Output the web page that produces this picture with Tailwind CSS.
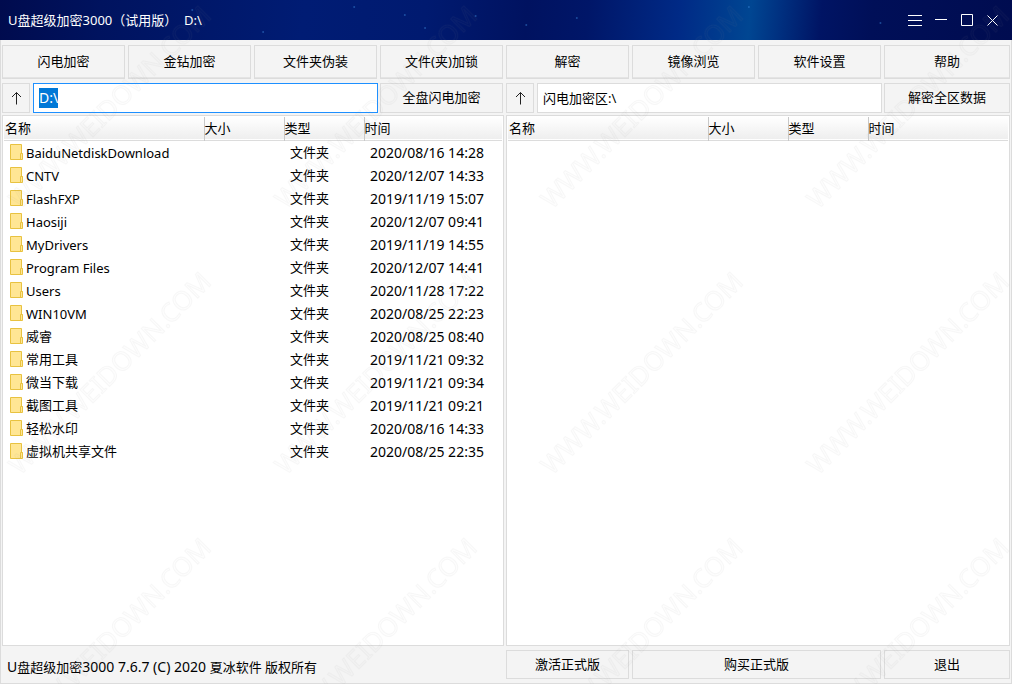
<!DOCTYPE html>
<html lang="zh-CN">
<head>
<meta charset="utf-8">
<meta name="viewport" content="width=device-width, initial-scale=1">
<title>U盘超级加密3000（试用版）</title>
<script src="https://cdn.jsdelivr.net/npm/@tailwindcss/browser@4"></script>
</head>
<body class="relative flex h-screen flex-col overflow-hidden bg-[#f4f4f4] font-['Noto_Sans','Noto_Sans_CJK_SC',sans-serif] text-[13px] leading-5 text-black">

<header class="relative flex h-10 shrink-0 items-center justify-between bg-[linear-gradient(95deg,#000b4e,#00135f_10%,#001c74_30%,#001a70_42%,#001260_52%,#001668_58%,#002a86_67%,#004692_74%,#003080_77%,#001464_81%,#000f58_86%,#000c50)] pr-3 pl-2 text-[13px] text-white">
  <svg aria-hidden="true" class="absolute inset-0 h-full w-full" fill="#3d8fe0" fill-opacity=".45">
    <circle cx="19%" cy="10" r="1"/><circle cx="26%" cy="32" r="1"/><circle cx="35%" cy="7" r="1"/><circle cx="40%" cy="15" r="1"/><circle cx="42%" cy="28" r="1"/><circle cx="47%" cy="16" r="1"/><circle cx="52%" cy="25" r="1"/><circle cx="57%" cy="18" r="1"/><circle cx="74%" cy="7" r="1"/><circle cx="87%" cy="23" r="1"/>
  </svg>
  <h1 class="relative whitespace-pre">U盘超级加密3000（试用版）  D:\</h1>
  <div class="relative flex items-center gap-3">
    <button aria-label="菜单"><svg class="block" width="14" height="14" viewBox="0 0 14 14" stroke="#fff" fill="none"><path d="M0 2.500h14M0 7.500h14M0 12.500h14"/></svg></button>
    <button aria-label="最小化"><svg class="block" width="14" height="14" viewBox="0 0 14 14" stroke="#fff" fill="none"><path d="M1 6.500h12"/></svg></button>
    <button aria-label="最大化"><svg class="block" width="14" height="14" viewBox="0 0 14 14" stroke="#fff" fill="none"><path d="M1.500 1.500h11v11h-11z"/></svg></button>
    <button aria-label="关闭"><svg class="block" width="14" height="14" viewBox="0 0 14 14" stroke="#fff" fill="none"><path d="M1.500 2.500l10 10M11.500 2.500l-10 10"/></svg></button>
  </div>
</header>

<div class="flex min-h-0 grow flex-col border border-t-0 border-[#dcdcdc] px-px pt-[5px] pb-1">
  <nav class="grid shrink-0 grid-cols-[repeat(7,123fr)_126fr] gap-[3px]">
    <button class="h-[34px] border border-[#dcdcdc] pb-0.5 shadow-[inset_0_-1px_#e4e4e4]">闪电加密</button>
    <button class="h-[34px] border border-[#dcdcdc] pb-0.5 shadow-[inset_0_-1px_#e4e4e4]">金钻加密</button>
    <button class="h-[34px] border border-[#dcdcdc] pb-0.5 shadow-[inset_0_-1px_#e4e4e4]">文件夹伪装</button>
    <button class="h-[34px] border border-[#dcdcdc] pb-0.5 shadow-[inset_0_-1px_#e4e4e4]">文件(夹)加锁</button>
    <button class="h-[34px] border border-[#dcdcdc] pb-0.5 shadow-[inset_0_-1px_#e4e4e4]">解密</button>
    <button class="h-[34px] border border-[#dcdcdc] pb-0.5 shadow-[inset_0_-1px_#e4e4e4]">镜像浏览</button>
    <button class="h-[34px] border border-[#dcdcdc] pb-0.5 shadow-[inset_0_-1px_#e4e4e4]">软件设置</button>
    <button class="h-[34px] border border-[#dcdcdc] pb-0.5 shadow-[inset_0_-1px_#e4e4e4]">帮助</button>
  </nav>

  <main class="mt-1 grid min-h-0 grow grid-cols-[502fr_504fr] gap-0.5">
    <section class="flex min-h-0 flex-col gap-0.5" aria-label="磁盘">
      <div class="flex h-[30px] shrink-0 pr-px">
        <button aria-label="上一级" class="flex w-7 items-center justify-center border border-[#dcdcdc]"><svg width="12" height="14" viewBox="0 0 12 14" fill="none" stroke="#222"><path d="M6.500 13.500V1.500M2 6L6.500 1.500 11 6"/></svg></button>
        <input id="path" aria-label="路径" value="D:\" class="ml-[3px] min-w-0 grow border border-[#1e90ff] bg-white px-[5px] text-sm outline-none selection:bg-[#0078d7] selection:text-white">
        <button class="ml-0.5 w-[123px] border border-[#dcdcdc] pb-0.5">全盘闪电加密</button>
      </div>
      <div class="min-h-0 grow border border-[#dcdcdc] bg-white p-px">
        <table class="w-full table-fixed border-collapse text-left">
          <colgroup><col class="w-[200px]"><col class="w-20"><col class="w-20"><col></colgroup>
          <thead><tr class="h-[23px] border-b border-[#dcdcdc] bg-linear-to-b from-white to-[#eeeeee]">
            <th class="p-0 pb-px pl-px font-normal">名称</th>
            <th class="border-l border-[#c8c8c8] p-0 pb-px font-normal">大小</th>
            <th class="border-l border-[#c8c8c8] p-0 pb-px font-normal">类型</th>
            <th class="border-l border-[#c8c8c8] p-0 pb-px font-normal">时间</th>
          </tr></thead>
          <tbody id="files"></tbody>
        </table>
      </div>
    </section>

    <section class="flex min-h-0 flex-col gap-0.5" aria-label="闪电加密区">
      <div class="flex h-[30px] shrink-0">
        <button aria-label="上一级" class="flex w-7 items-center justify-center border border-[#dcdcdc]"><svg width="12" height="14" viewBox="0 0 12 14" fill="none" stroke="#222"><path d="M6.500 13.500V1.500M2 6L6.500 1.500 11 6"/></svg></button>
        <input aria-label="加密区路径" value="闪电加密区:\" class="ml-[3px] min-w-0 grow border border-[#dcdcdc] bg-white px-[5px] outline-none">
        <button class="ml-0.5 w-[126px] border border-[#dcdcdc] pb-0.5">解密全区数据</button>
      </div>
      <div class="min-h-0 grow border border-[#dcdcdc] bg-white p-px">
        <table class="w-full table-fixed border-collapse text-left">
          <colgroup><col class="w-[200px]"><col class="w-20"><col class="w-20"><col></colgroup>
          <thead><tr class="h-[23px] border-b border-[#dcdcdc] bg-linear-to-b from-white to-[#eeeeee]">
            <th class="p-0 pb-px pl-px font-normal">名称</th>
            <th class="border-l border-[#c8c8c8] p-0 pb-px font-normal">大小</th>
            <th class="border-l border-[#c8c8c8] p-0 pb-px font-normal">类型</th>
            <th class="border-l border-[#c8c8c8] p-0 pb-px font-normal">时间</th>
          </tr></thead>
        </table>
      </div>
    </section>
  </main>

  <footer class="mt-1 grid h-[29px] shrink-0 grid-cols-[501fr_123fr_249fr_126fr] gap-[3px]">
    <p class="pt-[7px] pl-[5px] leading-5"><span class="text-sm leading-5">U</span>盘超级加密<span class="text-sm leading-5">3000 7.6.7 (C) 2020 </span>夏冰软件 版权所有</p>
    <button class="border border-[#dcdcdc] pb-0.5">激活正式版</button>
    <button class="border border-[#dcdcdc] pb-0.5">购买正式版</button>
    <button class="border border-[#dcdcdc] pb-0.5">退出</button>
  </footer>
</div>

<svg aria-hidden="true" class="pointer-events-none absolute inset-0 h-full w-full">
  <defs><pattern id="mark" width="266" height="266" patternUnits="userSpaceOnUse">
    <text transform="translate(20 210) rotate(-45)" font-family="Noto Sans, sans-serif" font-size="26" fill="#808080" fill-opacity=".015" stroke="#808080" stroke-opacity=".055" stroke-width="1">WWW.WEIDOWN.COM</text>
  </pattern></defs>
  <rect width="100%" height="100%" fill="url(#mark)"/>
</svg>

<script>
const files = [
  ["BaiduNetdiskDownload", "2020/08/16 14:28"],
  ["CNTV", "2020/12/07 14:33"],
  ["FlashFXP", "2019/11/19 15:07"],
  ["Haosiji", "2020/12/07 09:41"],
  ["MyDrivers", "2019/11/19 14:55"],
  ["Program Files", "2020/12/07 14:41"],
  ["Users", "2020/11/28 17:22"],
  ["WIN10VM", "2020/08/25 22:23"],
  ["威睿", "2020/08/25 08:40"],
  ["常用工具", "2019/11/21 09:32"],
  ["微当下载", "2019/11/21 09:34"],
  ["截图工具", "2019/11/21 09:21"],
  ["轻松水印", "2020/08/16 14:33"],
  ["虚拟机共享文件", "2020/08/25 22:35"]
];
document.getElementById("files").innerHTML = files.map(([name, time]) => `
  <tr class="h-[23px]">
    <td class="p-0 pl-1.5"><div class="flex h-[23px] items-start gap-[3px]">
      <svg class="mt-[3px] shrink-0" width="13" height="16" viewBox="0 0 13 16"><path d="M.5.5h11v9h1v6H.5z" fill="#ffe694" stroke="#e8c240"/><path d="M10.500 15v-5.500h2" fill="none" stroke="#e8c240"/></svg>
      <span class="${/^[ -~]+$/.test(name) ? "leading-[25px]" : "leading-[23px]"}">${name}</span></div></td>
    <td class="p-0"></td>
    <td class="p-0 pl-1.5">文件夹</td>
    <td class="p-0 pt-0.5 pl-1.5 text-sm leading-5">${time}</td>
  </tr>`).join("");
const path = document.getElementById("path");
path.focus();
path.select();
</script>
</body>
</html>
